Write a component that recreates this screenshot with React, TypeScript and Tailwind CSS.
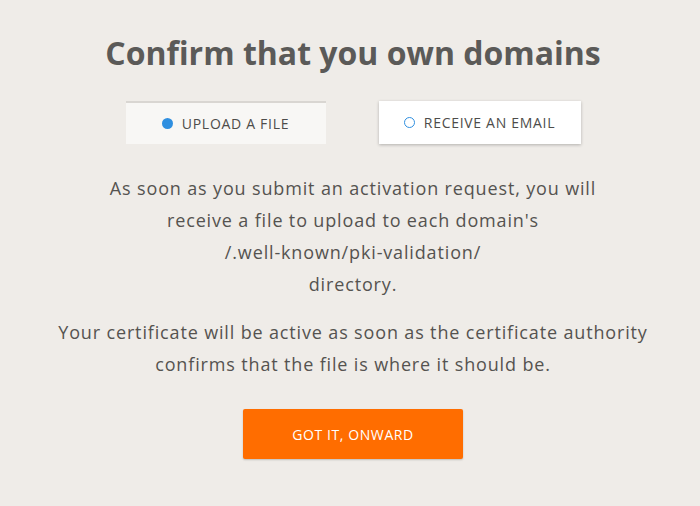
import React from "react";

export default function App() {
  return (
    <div
      className="w-[700px] h-[506px] pl-[6px] bg-[#efece8] flex flex-col items-center text-[#555350]"
      style={{ fontFamily: "'Open Sans', sans-serif" }}
    >
      <h1 className="mt-[33px] text-[32px] leading-[40px] font-bold text-[#5b5a58]">
        Confirm that you own domains
      </h1>
      <div className="mt-[28px] flex gap-[53px]">
        <button className="w-[200px] h-[43px] bg-[#f8f7f5] border-t-2 border-[#d9d6d2] flex items-center justify-center gap-[9px] text-[14px] tracking-[0.7px] text-[#4d4c4a]">
          <span className="w-[11px] h-[11px] rounded-full bg-[#2f8fe0]" />
          UPLOAD A FILE
        </button>
        <button className="w-[202px] h-[43px] bg-white shadow-[0_1px_3px_rgba(0,0,0,0.25)] flex items-center justify-center gap-[9px] text-[14px] tracking-[0.7px] text-[#4d4c4a]">
          <span className="w-[11px] h-[11px] rounded-full border-[1.5px] border-[#2f8fe0]" />
          RECEIVE AN EMAIL
        </button>
      </div>
      <p className="mt-[28px] text-[18px] leading-[32px] tracking-[0.85px] text-center">
        As soon as you submit an activation request, you will
        <br />
        receive a file to upload to each domain's
        <br />
        /.well-known/pki-validation/
        <br />
        directory.
      </p>
      <p className="mt-[16px] text-[18px] leading-[32px] tracking-[0.85px] text-center">
        Your certificate will be active as soon as the certificate authority
        <br />
        confirms that the file is where it should be.
      </p>
      <button className="mt-[29px] w-[220px] h-[50px] bg-[#ff6d00] rounded-[2px] shadow-[0_1px_2px_rgba(0,0,0,0.2)] text-white text-[14px] tracking-[0.6px]">
        GOT IT, ONWARD
      </button>
    </div>
  );
}
